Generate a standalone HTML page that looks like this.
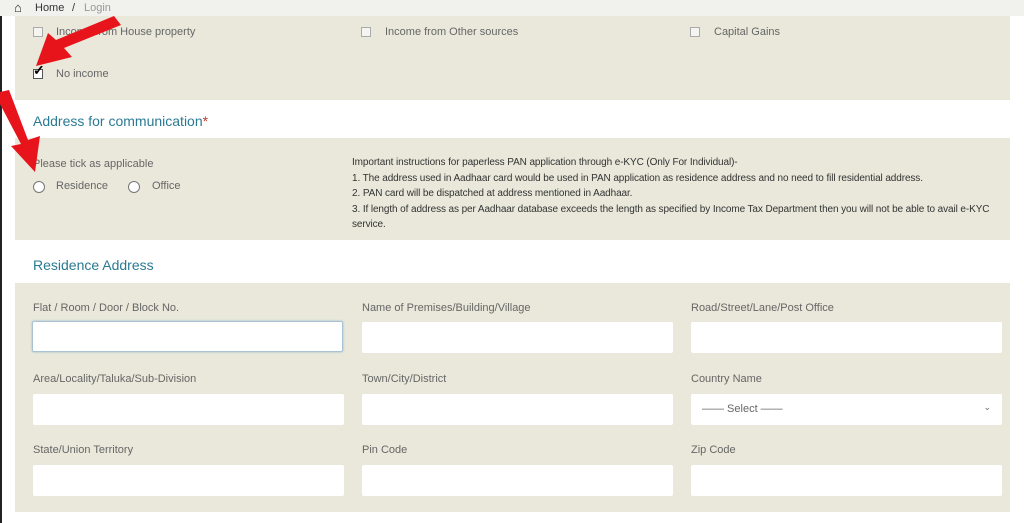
<!DOCTYPE html>
<html><head><meta charset="utf-8"><style>
*{box-sizing:border-box;margin:0;padding:0}
body{width:1024px;height:523px;overflow:hidden;background:#fff;font-family:"Liberation Sans",Arial,sans-serif;position:relative;color:#555}
.abs{position:absolute}
.crumb{left:0;top:0;width:1024px;height:16px;background:#f1f1ed;font-size:11px;color:#333}
.panel{background:#e9e8db;left:15px;width:995px}
.lbl{font-size:11px;color:#666}
.h{font-size:14px;color:#2a7a93}
.in{background:#fff;height:31px;width:311px;border-radius:2px}
.cb{width:10px;height:10px;border:1px solid #aaa;background:#f4f4f0}
.rd{width:12px;height:12px;border:1px solid #777;border-radius:50%;background:#fff}
.ins{font-size:10px;color:#333;line-height:15.5px;letter-spacing:-0.1px}
</style></head><body>
<div class="abs" style="left:0;top:0;width:2px;height:523px;background:#222"></div>
<div class="abs crumb"><span class="abs" style="left:14px;top:0px;font-size:13px;color:#222">&#8962;</span><span class="abs" style="left:35px;top:2px">Home</span><span class="abs" style="left:72px;top:2px">/</span><span class="abs" style="left:84px;top:2px;color:#999">Login</span></div>
<div class="abs panel" style="top:16px;height:84px"></div>
<div class="abs cb" style="left:33px;top:27px"></div><div class="abs lbl" style="left:56px;top:26px">Income from House property</div>
<div class="abs cb" style="left:361px;top:27px"></div><div class="abs lbl" style="left:385px;top:26px">Income from Other sources</div>
<div class="abs cb" style="left:690px;top:27px"></div><div class="abs lbl" style="left:714px;top:26px">Capital Gains</div>
<div class="abs cb" style="left:33px;top:69px;border-color:#555;background:#fff"></div><div class="abs" style="left:33px;top:62px;font-size:14px;color:#000;font-weight:bold">&#10003;</div><div class="abs lbl" style="left:56px;top:68px">No income</div>
<div class="abs h" style="left:33px;top:113px">Address for communication<span style="color:#c0392b">*</span></div>
<div class="abs panel" style="top:138px;height:102px"></div>
<div class="abs lbl" style="left:33px;top:158px">Please tick as applicable</div>
<div class="abs rd" style="left:33px;top:181px"></div><div class="abs lbl" style="left:56px;top:180px">Residence</div>
<div class="abs rd" style="left:128px;top:181px"></div><div class="abs lbl" style="left:152px;top:180px">Office</div>
<div class="abs ins" style="left:352px;top:155px">Important instructions for paperless PAN application through e-KYC (Only For Individual)-<br>1. The address used in Aadhaar card would be used in PAN application as residence address and no need to fill residential address.<br>2. PAN card will be dispatched at address mentioned in Aadhaar.<br>3. If length of address as per Aadhaar database exceeds the length as specified by Income Tax Department then you will not be able to avail e-KYC<br>service.</div>
<div class="abs h" style="left:33px;top:257px">Residence Address</div>
<div class="abs panel" style="top:283px;height:229px"></div>
<div class="abs lbl" style="left:33px;top:302px">Flat / Room / Door / Block No.</div>
<div class="abs lbl" style="left:362px;top:302px">Name of Premises/Building/Village</div>
<div class="abs lbl" style="left:691px;top:302px">Road/Street/Lane/Post Office</div>
<div class="abs in" style="left:32px;top:321px;border:1px solid #a8c4d4;box-shadow:0 0 2px #9bc"></div>
<div class="abs in" style="left:362px;top:322px"></div>
<div class="abs in" style="left:691px;top:322px"></div>
<div class="abs lbl" style="left:33px;top:373px">Area/Locality/Taluka/Sub-Division</div>
<div class="abs lbl" style="left:362px;top:373px">Town/City/District</div>
<div class="abs lbl" style="left:691px;top:373px">Country Name</div>
<div class="abs in" style="left:33px;top:394px"></div>
<div class="abs in" style="left:362px;top:394px"></div>
<div class="abs in" style="left:691px;top:394px"><span class="abs lbl" style="left:11px;top:9px;color:#666">—— Select ——</span><span class="abs" style="right:11px;top:8px;font-size:9px;color:#666">&#8964;</span></div>
<div class="abs lbl" style="left:33px;top:444px">State/Union Territory</div>
<div class="abs lbl" style="left:362px;top:444px">Pin Code</div>
<div class="abs lbl" style="left:691px;top:444px">Zip Code</div>
<div class="abs in" style="left:33px;top:465px"></div>
<div class="abs in" style="left:362px;top:465px"></div>
<div class="abs in" style="left:691px;top:465px"></div>
<svg class="abs" style="left:0;top:0" width="200" height="200">
<polygon fill="#e8141b" points="114,16 121,25 64,48 72,57 36,66 48,33 56,40"/>
<polygon fill="#e8141b" points="0,92 9,90 28,140 40,136 35,172 11,146 21,144 0,104"/>
</svg>
</body></html>
